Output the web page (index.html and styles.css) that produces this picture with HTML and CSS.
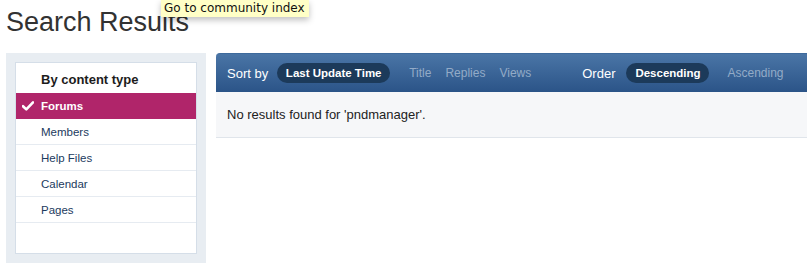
FILE: index.html
```html
<html>
  <head>
    <title>Search Results</title>
    <link rel="stylesheet" href="styles.css">
  </head>
  <body>
    <h1 class="page-title">Search Results</h1>
    <div class="tooltip">Go to community index</div>

    <div class="layout">
      <!-- filter sidebar -->
      <div class="sidebar">
        <div class="filter-box">
          <h3 class="filter-title">By content type</h3>
          <ul class="filter-list">
            <li class="filter-item active">
              <svg class="check" width="12" height="10" viewBox="0 0 12 10">
                <path d="M1 5.2 L4.3 8.4 L11 1.4" fill="none" stroke="#fff" stroke-width="2.6" stroke-linecap="round" stroke-linejoin="round"/>
              </svg>
              Forums
            </li>
            <li class="filter-item">Members</li>
            <li class="filter-item">Help Files</li>
            <li class="filter-item">Calendar</li>
            <li class="filter-item">Pages</li>
          </ul>
        </div>
      </div>

      <!-- results -->
      <div class="results">
        <div class="sort-bar">
          <span class="sort-label">Sort by</span>
          <span class="pill pill-sort">Last Update Time</span>
          <span class="sort-link link-title">Title</span>
          <span class="sort-link link-replies">Replies</span>
          <span class="sort-link link-views">Views</span>
          <span class="sort-label order-label">Order</span>
          <span class="pill pill-order">Descending</span>
          <span class="sort-link link-asc">Ascending</span>
        </div>
        <div class="results-body">No results found for 'pndmanager'.</div>
      </div>
    </div>
  </body>
</html>
```

FILE: styles.css
```css
body {
  margin: 0;
  background-color: #ffffff;
  font-family: "Liberation Sans", Arial, sans-serif;
  color: #222222;
  overflow: hidden;
}
.page-title {
  margin: 7px 0 15px 6px;
  font-size: 27px;
  font-weight: normal;
  line-height: 31px;
  color: #323232;
}
.tooltip {
  position: absolute;
  left: 161px;
  top: 0;
  height: 17px;
  padding: 0 4px 0 3px;
  background-color: #ffffc6;
  font-family: "DejaVu Sans", sans-serif;
  font-size: 12px;
  line-height: 16px;
  color: #111111;
  box-shadow: 0 3px 6px rgba(0, 0, 0, 0.25);
}
.layout {
  display: flex;
  align-items: flex-start;
  padding-left: 6px;
  gap: 10px;
}
.sidebar {
  width: 182px;
  flex-shrink: 0;
  padding: 9px;
  background-color: #e8edf2;
}
.filter-box {
  background-color: #ffffff;
  border: 1px solid #d5dee8;
  height: 190px;
}
.filter-title {
  margin: 0;
  height: 30px;
  padding-left: 25px;
  font-size: 13px;
  line-height: 33px;
  color: #1c1c1c;
}
.filter-list {
  list-style: none;
  margin: 0;
  padding: 0;
}
.filter-item {
  position: relative;
  height: 25px;
  line-height: 26px;
  padding-left: 25px;
  font-size: 11.5px;
  color: #1b3a5e;
  border-bottom: 1px solid #e6ebf1;
}
.filter-item.active {
  background-color: #b0256a;
  color: #ffffff;
  font-weight: bold;
  border-bottom-color: #b0256a;
}
.check {
  position: absolute;
  left: 6px;
  top: 8px;
}
.results {
  flex: 1;
  min-width: 0;
}
.sort-bar {
  display: flex;
  align-items: center;
  height: 39px;
  padding-left: 11px;
  border-radius: 4px 0 0 0;
  background: linear-gradient(#4a75a6, #2b5488);
  border-top: 1px solid #3e6a9c;
  box-sizing: border-box;
  white-space: nowrap;
  overflow: hidden;
}
.sort-label {
  font-size: 13px;
  color: #ffffff;
  margin-right: 9px;
}
.pill {
  height: 20px;
  line-height: 20px;
  padding: 0 8px;
  border-radius: 10px;
  background-color: #1c3a5a;
  color: #ffffff;
  font-size: 11.5px;
  font-weight: bold;
  text-align: center;
}
.pill-sort {
  width: 97px;
}
.pill-order {
  width: 67px;
}
.sort-link {
  font-size: 12px;
  color: #93abc7;
}
.link-title {
  margin-left: 19px;
}
.link-replies,
.link-views {
  margin-left: 14px;
}
.order-label {
  margin-left: 51px;
  margin-right: 11px;
}
.link-asc {
  margin-left: 18px;
}
.results-body {
  height: 45px;
  padding-left: 11px;
  line-height: 46px;
  font-size: 13px;
  color: #222222;
  background-color: #f6f7f9;
  border-bottom: 1px solid #e0e5eb;
}
```
